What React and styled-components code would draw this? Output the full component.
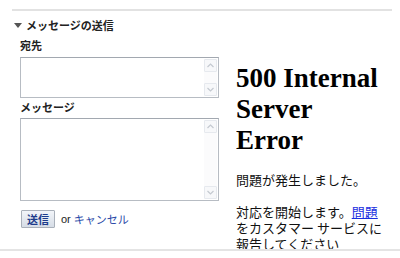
import React from "react"
import styled, { createGlobalStyle } from "styled-components"

const Global = createGlobalStyle`
  html, body {
    margin: 0;
    padding: 0;
    background: #fff;
  }
  body {
    font-family: "Noto Sans CJK JP", "Liberation Sans", sans-serif;
    color: #000;
  }
`

const Page = styled.div`
  width: 400px;
  height: 258px;
  overflow: hidden;
  padding-top: 9px;
  box-sizing: border-box;
`

const Panel = styled.div`
  margin-left: 12px;
  width: 380px;
  border-top: 2px solid #e2e2e2;
  box-shadow: 0 1px 0 #f3f3f3;
`

const Header = styled.div`
  display: flex;
  align-items: center;
  gap: 4px;
  margin-top: 7px;
  padding-left: 2px;
  font-size: 11px;
  line-height: 14px;
  font-weight: bold;
  color: #222;
`

const Triangle = styled.span`
  width: 0;
  height: 0;
  border-left: 4px solid transparent;
  border-right: 4px solid transparent;
  border-top: 5px solid #555;
  margin-top: 1px;
`

const Body = styled.div`
  display: flex;
  align-items: flex-start;
`

const Form = styled.div`
  margin-left: 8px;
  width: 199px;
  display: flex;
  flex-direction: column;
`

const Label = styled.div`
  font-size: 11px;
  line-height: 14px;
  font-weight: bold;
  color: #222;
  margin-top: ${(p) => p.$top}px;
  margin-bottom: ${(p) => p.$bottom}px;
`

const Field = styled.div`
  display: flex;
  height: ${(p) => p.$height}px;
  box-sizing: border-box;
  border: 1px solid #b7bcc3;
  border-top-color: #a2a8b0;
  background: #fff;
`

const Input = styled.textarea`
  flex: 1;
  border: none;
  outline: none;
  resize: none;
  overflow: hidden;
  padding: 2px;
  font-family: "Noto Sans CJK JP", sans-serif;
  font-size: 12px;
  background: transparent;
`

const Scrollbar = styled.div`
  width: 13px;
  margin: 1px 1px 1px 0;
  display: flex;
  flex-direction: column;
  justify-content: space-between;
  background: #fbfbfc;
`

const ScrollButton = styled.div`
  height: 13px;
  box-sizing: border-box;
  border: 1px solid #e6e9ee;
  border-radius: 1px;
  background: #f7f8fa;
  display: flex;
  align-items: center;
  justify-content: center;
`

const Actions = styled.div`
  display: flex;
  align-items: center;
  gap: 6px;
  margin-top: 9px;
  margin-left: 1px;
  font-size: 11px;
`

const SubmitButton = styled.button`
  width: 34px;
  height: 18px;
  padding: 0;
  border: 1px solid #a9b0ba;
  border-radius: 1px;
  background: linear-gradient(#f2f5f9, #d6dde6);
  font-family: "Noto Sans CJK JP", sans-serif;
  font-size: 11px;
  font-weight: bold;
  color: #1d3c8c;
  line-height: 14px;
`

const Or = styled.span`
  color: #222;
  font-family: "Liberation Sans", sans-serif;
`

const CancelLink = styled.a`
  color: #2a4aa8;
  text-decoration: none;
  margin-left: -3px;
`

const ErrorPane = styled.div`
  margin-left: 17px;
  width: 156px;
  height: 217px;
  overflow: hidden;
  padding-top: 31px;
  box-sizing: border-box;
`

const Title = styled.h1`
  margin: 0;
  font-family: "Liberation Serif", serif;
  font-size: 27px;
  line-height: 31px;
  font-weight: bold;
`

const Message = styled.p`
  margin: 16px 0 0;
  font-size: 13px;
  line-height: 16px;
  white-space: nowrap;
  color: #111;
`

const ReportLink = styled.a`
  color: #1a2ee0;
  text-decoration: underline;
`

const BottomRule = styled.div`
  border-top: 2px solid #e4e4e4;
`

function Chevron({ up }) {
  return (
    <svg width="7" height="5" viewBox="0 0 7 5">
      <path
        d={up ? "M0.5 4 L3.5 1 L6.5 4" : "M0.5 1 L3.5 4 L6.5 1"}
        fill="none"
        stroke="#c4c9d0"
        strokeWidth="1.2"
      />
    </svg>
  )
}

function TextBox({ height }) {
  return (
    <Field $height={height}>
      <Input />
      <Scrollbar>
        <ScrollButton>
          <Chevron up />
        </ScrollButton>
        <ScrollButton>
          <Chevron />
        </ScrollButton>
      </Scrollbar>
    </Field>
  )
}

export default function App() {
  return (
    <Page>
      <Global />
      <Panel>
        <Header>
          <Triangle />
          メッセージの送信
        </Header>
        <Body>
          <Form>
            <Label $top={6} $bottom={5}>宛先</Label>
            <TextBox height={41} />
            <Label $top={2} $bottom={4}>メッセージ</Label>
            <TextBox height={83} />
            <Actions>
              <SubmitButton>送信</SubmitButton>
              <Or>or</Or>
              <CancelLink href="#">キャンセル</CancelLink>
            </Actions>
          </Form>
          <ErrorPane>
            <Title>
              500 Internal
              <br />
              Server
              <br />
              Error
            </Title>
            <Message>問題が発生しました。</Message>
            <Message>
              対応を開始します。<ReportLink href="#">問題</ReportLink>
              <br />
              をカスタマー サービスに
              <br />
              報告してください
            </Message>
          </ErrorPane>
        </Body>
      </Panel>
      <BottomRule />
    </Page>
  )
}
